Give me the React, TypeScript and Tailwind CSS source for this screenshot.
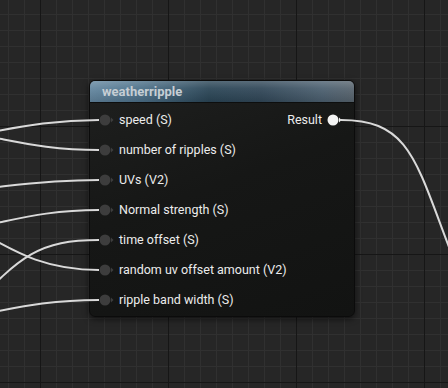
import React from "react";

const inputs = [
  "speed (S)",
  "number of ripples (S)",
  "UVs (V2)",
  "Normal strength (S)",
  "time offset (S)",
  "random uv offset amount (V2)",
  "ripple band width (S)",
];

// wires coming in from the left, ending at each input pin
const wires = [
  "M -80 140 C -20 140, 20 120, 99 120",
  "M -80 130 C -10 130, 20 150, 99 150",
  "M -80 192 C -10 192, 20 180, 99 180",
  "M -80 232 C -10 232, 20 210, 99 210",
  "M -30 310 C 20 255, 40 240, 99 240",
  "M -40 222 C 0 240, 30 270, 99 270",
  "M -80 322 C -10 318, 20 300, 99 300",
  "M 341 120 C 418 120, 416 170, 466 290",
];

function Pin({ filled }: { filled?: boolean }) {
  const c = filled ? "#f4f4f4" : "#3d3d3d";
  return (
    <svg width="16" height="12" viewBox="0 0 16 12" className="shrink-0">
      <circle cx="6" cy="6" r="5.5" fill={c} />
      <polygon points="12,3.5 14.5,6 12,8.5" fill={c} />
    </svg>
  );
}

export default function App() {
  return (
    <div
      className="relative w-[448px] h-[388px] overflow-hidden bg-[#262626] bg-[linear-gradient(to_right,#161616_1px,transparent_1px),linear-gradient(to_bottom,#161616_1px,transparent_1px),linear-gradient(to_right,#303030_1px,transparent_1px),linear-gradient(to_bottom,#303030_1px,transparent_1px)] bg-[size:128px_128px,128px_128px,16px_16px,16px_16px] bg-[position:40px_126px,40px_126px,8px_14px,8px_14px]"
      style={{ fontFamily: "Roboto, 'Liberation Sans', sans-serif" }}
    >
      {/* node */}
      <div className="absolute left-[89px] top-[80px] w-[266px] rounded-[6px] border border-[#0b0b0b] bg-[linear-gradient(160deg,#1f201f_0%,#161716_45%,#121312_100%)] shadow-[0_2px_6px_rgba(0,0,0,0.6)] overflow-hidden">
        <div className="relative h-[21px] flex items-center pl-[12px] bg-[linear-gradient(to_right,#6487a0_0%,#4e728b_18%,#2b4657_45%,#324859_65%,#4c6070_88%,#58646e_100%)]">
          <div className="absolute inset-0 bg-[linear-gradient(to_bottom,rgba(255,255,255,0.2)_0%,rgba(255,255,255,0.06)_35%,rgba(0,0,0,0.12)_100%)]" />
          <span className="relative text-[13px] font-bold text-[#c6ced4] leading-none">
            weatherripple
          </span>
        </div>
        <div className="h-px bg-[#0d0e0e]" />
        <div className="flex flex-col pt-[2px] pb-px">
          {inputs.map((label, i) => (
            <div key={label} className="h-[30px] flex items-center justify-between pl-[9px] pr-[11px]">
              <div className="flex items-center gap-[4px]">
                <Pin />
                <span className="text-[12.5px] text-[#ececec] leading-none whitespace-nowrap">{label}</span>
              </div>
              {i === 0 && (
                <div className="flex items-center gap-[5px]">
                  <span className="text-[12.5px] text-[#ececec] leading-none">Result</span>
                  <Pin filled />
                </div>
              )}
            </div>
          ))}
        </div>
      </div>

      {/* wires */}
      <svg className="absolute inset-0 pointer-events-none" width="448" height="388">
        {wires.map((d, i) => (
          <path key={i} d={d} fill="none" stroke="#d9d9d9" strokeWidth="2" />
        ))}
      </svg>
    </div>
  );
}
